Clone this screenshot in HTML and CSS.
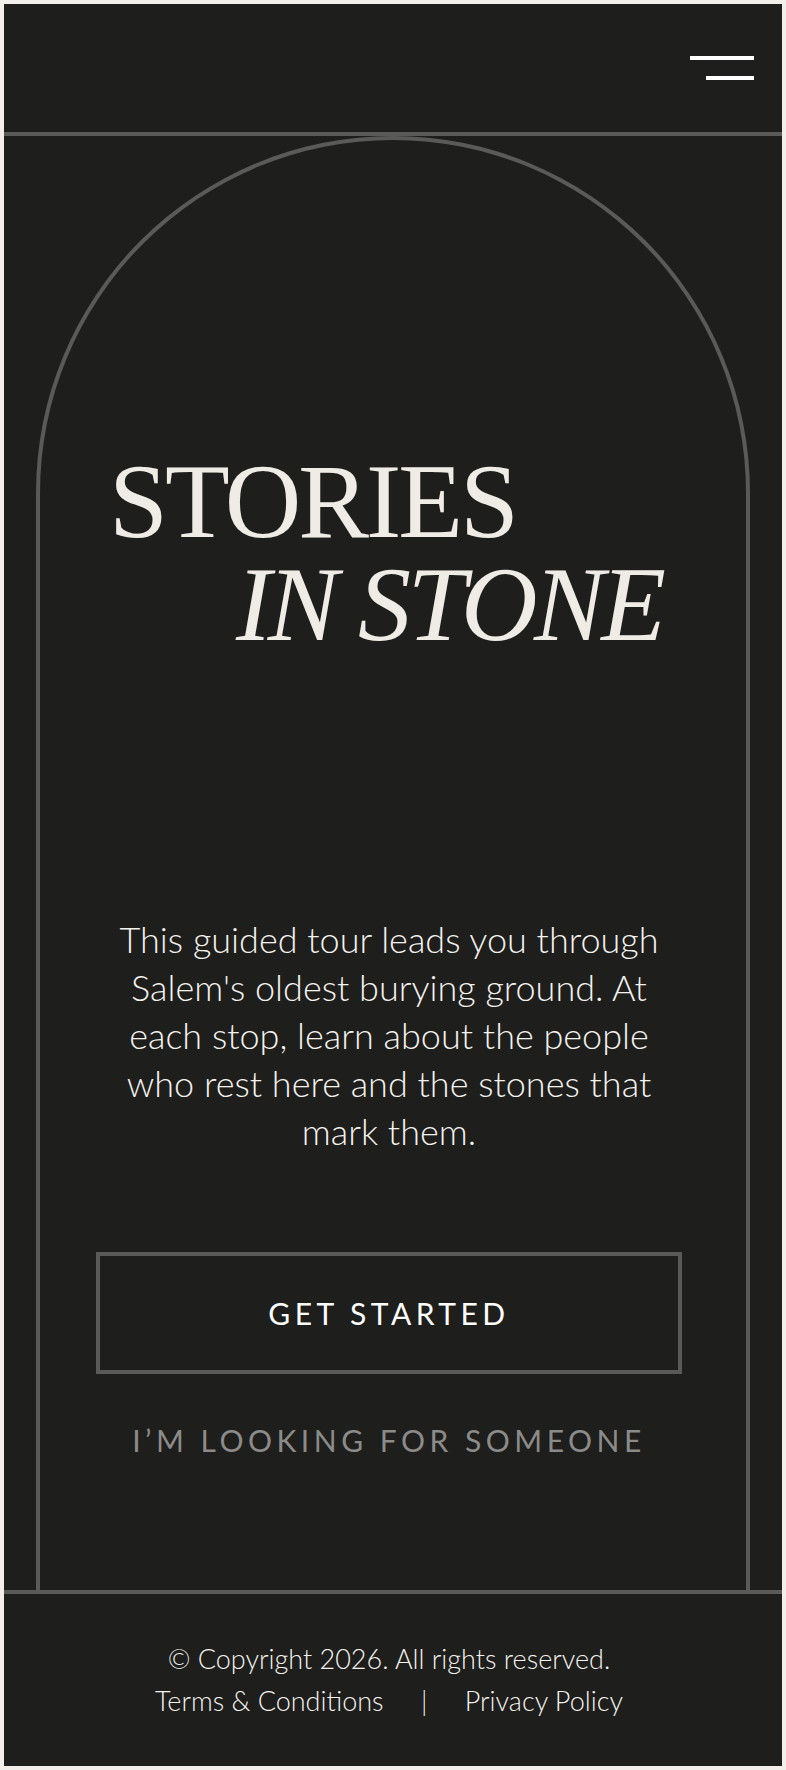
FILE: index.html
```html
<!DOCTYPE html>
<html lang="en">
  <head>
    <meta charset="UTF-8" />
    <meta name="viewport" content="width=device-width, initial-scale=1.0" />
    <title>Stories in Stone</title>
    <link rel="stylesheet" href="styles.css">
  </head>
  <body>
    <div class="page">
      <header class="topbar">
        <button class="menu" aria-label="Menu">
          <span class="bar long"></span>
          <span class="bar short"></span>
        </button>
      </header>

      <main class="stage">
        <div class="arch">
          <h1 class="title">
            <span class="line">STORIES</span>
            <span class="line italic">IN STONE</span>
          </h1>

          <p class="intro">This guided tour leads you through Salem's oldest burying ground. At each stop, learn about the people who rest here and the stones that mark them.</p>

          <a href="#" class="btn">GET STARTED</a>
          <a href="#" class="link">I’M LOOKING FOR SOMEONE</a>
        </div>
      </main>

      <footer class="footer">
        <p>© Copyright 2026. All rights reserved.</p>
        <p class="legal">
          <a href="#">Terms &amp; Conditions</a>
          <span class="sep">|</span>
          <a href="#">Privacy Policy</a>
        </p>
      </footer>
    </div>
  </body>
</html>
```

FILE: styles.css
```css
* {
  margin: 0;
  padding: 0;
  box-sizing: border-box;
}
body {
  background: #f2efeb;
  font-family: 'Lato', 'Liberation Sans', sans-serif;
}
a {
  text-decoration: none;
  color: inherit;
}
.page {
  margin: 4px;
  height: 1762px;
  background: #1e1e1c;
  display: flex;
  flex-direction: column;
  color: #f4f2ee;
}
.topbar {
  height: 132px;
  border-bottom: 4px solid #5a5a58;
  display: flex;
  align-items: center;
  justify-content: flex-end;
  padding-right: 28px;
}
.menu {
  width: 64px;
  height: 24px;
  background: none;
  border: none;
  display: flex;
  flex-direction: column;
  align-items: flex-end;
  justify-content: space-between;
  cursor: pointer;
}
.bar {
  display: block;
  height: 4px;
  background: #fff;
}
.bar.long {
  width: 64px;
}
.bar.short {
  width: 48px;
}
.stage {
  flex: 1;
  padding: 0 32px;
  display: flex;
}
.arch {
  flex: 1;
  padding-right: 8px;
  border: 4px solid #5a5a58;
  border-bottom: none;
  border-radius: 357px 357px 0 0;
  display: flex;
  flex-direction: column;
  align-items: center;
}
.title {
  margin-top: 310px;
  width: 560px;
  font-family: 'Liberation Serif', serif;
  font-weight: normal;
  font-size: 106px;
  line-height: 103px;
  letter-spacing: -3px;
  color: #efebe5;
}
.title .line {
  display: block;
}
.title .italic {
  font-style: italic;
  letter-spacing: -3.5px;
  padding-left: 127px;
}
.intro {
  margin-top: 259px;
  width: 570px;
  text-align: center;
  font-size: 36px;
  font-weight: 300;
  line-height: 48px;
}
.btn {
  margin-top: 97px;
  width: 586px;
  height: 122px;
  flex-shrink: 0;
  border: 4px solid #5a5a58;
  display: flex;
  align-items: center;
  justify-content: center;
  font-size: 30px;
  letter-spacing: 4.5px;
  color: #fff;
}
.link {
  margin-top: 51px;
  font-size: 30px;
  line-height: 30px;
  letter-spacing: 4.5px;
  color: #8b8b89;
}
.footer {
  height: 176px;
  padding-right: 8px;
  border-top: 4px solid #5a5a58;
  display: flex;
  flex-direction: column;
  align-items: center;
  justify-content: center;
  font-size: 27px;
  font-weight: 300;
  line-height: 42px;
}
.legal .sep {
  margin: 0 30px;
}
```
